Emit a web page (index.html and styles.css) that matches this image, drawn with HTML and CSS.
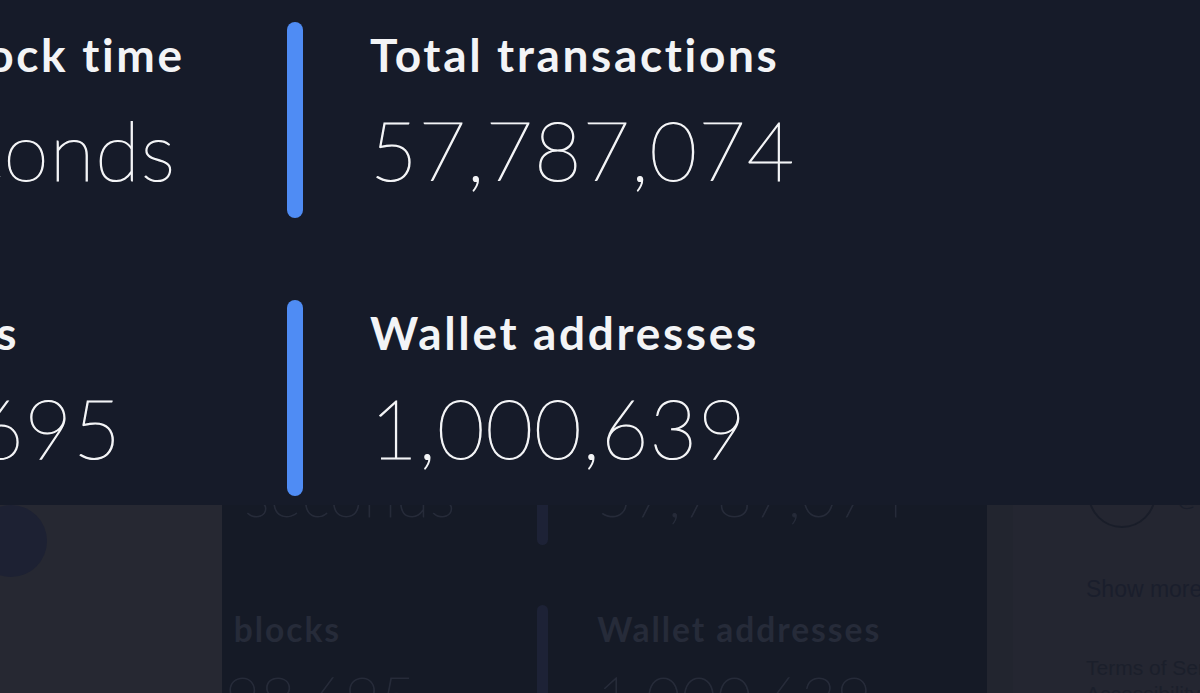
FILE: index.html
```html
<!DOCTYPE html>
<html lang="en">
<head>
<meta charset="utf-8">
<title>Network stats</title>
<link rel="stylesheet" href="styles.css">
</head>
<body>
  <div class="page">
    <aside class="nav">
      <span class="nav-avatar"></span>
    </aside>

    <main class="feed">
      <div class="stats stats--small">
        <div class="stat">
          <div class="stat-label">Average block time</div>
          <div class="stat-value">2.5 seconds</div>
        </div>
        <div class="stat-bar"></div>
        <div class="stat stat--right">
          <div class="stat-label">Total transactions</div>
          <div class="stat-value">57,787,074</div>
        </div>
        <div class="stat">
          <div class="stat-label">Total blocks</div>
          <div class="stat-value">1,098,695</div>
        </div>
        <div class="stat-bar"></div>
        <div class="stat stat--right">
          <div class="stat-label">Wallet addresses</div>
          <div class="stat-value">1,000,639</div>
        </div>
      </div>
    </main>

    <aside class="side">
      <div class="side-inner">
        <div class="profile">
          <span class="profile-ring"></span>
          <span class="profile-handle">@s</span>
        </div>
        <a class="show-more">Show more</a>
        <nav class="footer-links">
          <span>Terms of Service</span>
          <span>Accessibility</span>
        </nav>
      </div>
    </aside>
  </div>

  <section class="zoom-panel">
    <div class="stats">
      <div class="stat">
        <div class="stat-label">Average block time</div>
        <div class="stat-value">2.5 seconds</div>
      </div>
      <div class="stat-bar"></div>
      <div class="stat stat--right">
        <div class="stat-label">Total transactions</div>
        <div class="stat-value">57,787,074</div>
      </div>
      <div class="stat">
        <div class="stat-label">Total blocks</div>
        <div class="stat-value">1,098,695</div>
      </div>
      <div class="stat-bar"></div>
      <div class="stat stat--right">
        <div class="stat-label">Wallet addresses</div>
        <div class="stat-value">1,000,639</div>
      </div>
    </div>
  </section>
</body>
</html>
```

FILE: styles.css
```css
* { box-sizing: border-box; }

html, body {
  margin: 0;
  height: 100%;
}

body {
  width: 1200px;
  height: 693px;
  overflow: hidden;
  background: #151a26;
  font-family: "Liberation Sans", Arial, sans-serif;
  position: relative;
}

/* underlying page: nav, feed, right sidebar */
.page {
  display: grid;
  grid-template-columns: 222px 1fr 213px;
  height: 693px;
}

.nav {
  background: #262832;
  padding-top: 505px;
  overflow: hidden;
}

.nav-avatar {
  display: block;
  width: 72px;
  height: 72px;
  margin-left: -25px;
  border-radius: 50%;
  background: #1d2133;
}

.feed {
  background: #151a26;
  padding-top: 402px;
  overflow: hidden;
}

.side {
  background: #22252f;
  padding-left: 26px;
}

.side-inner {
  height: 100%;
  background: #242631;
  padding: 460px 0 0 73px;
  overflow: hidden;
}

.profile {
  display: flex;
  align-items: center;
  gap: 21px;
}

.profile-ring {
  display: block;
  width: 68px;
  height: 68px;
  margin-left: 2px;
  border-radius: 50%;
  border: 2px solid #191d29;
  flex: none;
}

.profile-handle {
  font-size: 21px;
  color: #1a1e2b;
  margin-top: 10px;
}

.show-more {
  display: block;
  margin-top: 47px;
  font-size: 23px;
  line-height: 28px;
  color: #1a1e2c;
  white-space: nowrap;
}

.footer-links {
  display: flex;
  flex-direction: column;
  margin-top: 52px;
  font-size: 21px;
  line-height: 26px;
  color: #1b1f2b;
  white-space: nowrap;
}

/* stats block, sized by --u so the same markup works at two scales */
.stats {
  --u: 1px;
  display: grid;
  grid-template-columns: calc(var(--u) * 542) calc(var(--u) * 16) auto;
  grid-auto-rows: calc(var(--u) * 196);
  row-gap: calc(var(--u) * 82);
  margin-left: -255px;
  color: #f3f4f6;
}

.stat {
  padding-top: calc(var(--u) * 5);
  white-space: nowrap;
}

.stat--right {
  padding-left: calc(var(--u) * 67);
}

.stat-label {
  font-family: Lato, "Open Sans", sans-serif;
  font-weight: 700;
  font-size: calc(var(--u) * 46);
  line-height: calc(var(--u) * 56);
  letter-spacing: 0.058em;
}

/* hairline face, thickened a touch to an extra-light weight */
.stat-value {
  font-family: Lato, "Open Sans", sans-serif;
  font-weight: 200;
  font-size: calc(var(--u) * 82);
  line-height: calc(var(--u) * 100);
  letter-spacing: calc(var(--u) * 1);
  margin-top: calc(var(--u) * 16);
  -webkit-text-stroke: calc(var(--u) * 1.2) currentColor;
}

.stat-bar {
  background: #4f8cf4;
  border-radius: calc(var(--u) * 8);
}

.stats--small {
  --u: 0.73px;
  margin-left: -81px;
  color: #262b39;
}

.stats--small .stat-bar {
  background: #1d2236;
}

/* magnified stats panel lying over the page */
.zoom-panel {
  position: absolute;
  top: 0;
  left: 0;
  width: 1200px;
  height: 505px;
  padding-top: 22px;
  background: #161b29;
  overflow: hidden;
}
```
